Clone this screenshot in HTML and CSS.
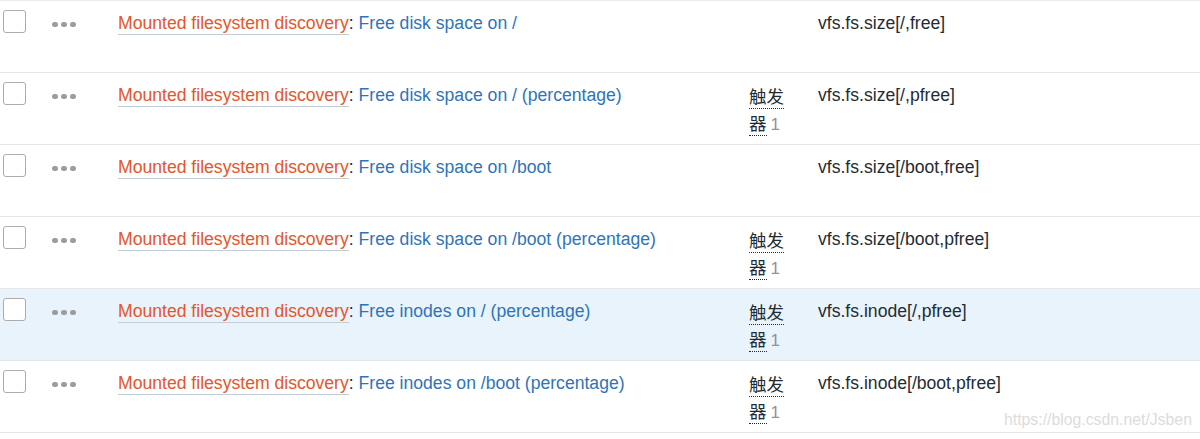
FILE: index.html
```html
<!DOCTYPE html>
<html>
<head>
<meta charset="utf-8">
<link rel="stylesheet" href="styles.css">
</head>
<body>
<div class="list">
  <div class="row">
    <div class="c-check"><span class="checkbox"></span></div>
    <div class="c-dots"><span class="dots"><i></i><i></i><i></i></span></div>
    <div class="c-name"><a class="rule">Mounted filesystem discovery</a>: <a class="item">Free disk space on /</a></div>
    <div class="c-trig"></div>
    <div class="c-key">vfs.fs.size[/,free]</div>
  </div>
  <div class="row">
    <div class="c-check"><span class="checkbox"></span></div>
    <div class="c-dots"><span class="dots"><i></i><i></i><i></i></span></div>
    <div class="c-name"><a class="rule">Mounted filesystem discovery</a>: <a class="item">Free disk space on / (percentage)</a></div>
    <div class="c-trig"><a class="trig">触发器</a> <span class="cnt">1</span></div>
    <div class="c-key">vfs.fs.size[/,pfree]</div>
  </div>
  <div class="row">
    <div class="c-check"><span class="checkbox"></span></div>
    <div class="c-dots"><span class="dots"><i></i><i></i><i></i></span></div>
    <div class="c-name"><a class="rule">Mounted filesystem discovery</a>: <a class="item">Free disk space on /boot</a></div>
    <div class="c-trig"></div>
    <div class="c-key">vfs.fs.size[/boot,free]</div>
  </div>
  <div class="row">
    <div class="c-check"><span class="checkbox"></span></div>
    <div class="c-dots"><span class="dots"><i></i><i></i><i></i></span></div>
    <div class="c-name"><a class="rule">Mounted filesystem discovery</a>: <a class="item">Free disk space on /boot (percentage)</a></div>
    <div class="c-trig"><a class="trig">触发器</a> <span class="cnt">1</span></div>
    <div class="c-key">vfs.fs.size[/boot,pfree]</div>
  </div>
  <div class="row hover">
    <div class="c-check"><span class="checkbox"></span></div>
    <div class="c-dots"><span class="dots"><i></i><i></i><i></i></span></div>
    <div class="c-name"><a class="rule">Mounted filesystem discovery</a>: <a class="item">Free inodes on / (percentage)</a></div>
    <div class="c-trig"><a class="trig">触发器</a> <span class="cnt">1</span></div>
    <div class="c-key">vfs.fs.inode[/,pfree]</div>
  </div>
  <div class="row">
    <div class="c-check"><span class="checkbox"></span></div>
    <div class="c-dots"><span class="dots"><i></i><i></i><i></i></span></div>
    <div class="c-name"><a class="rule">Mounted filesystem discovery</a>: <a class="item">Free inodes on /boot (percentage)</a></div>
    <div class="c-trig"><a class="trig">触发器</a> <span class="cnt">1</span></div>
    <div class="c-key">vfs.fs.inode[/boot,pfree]</div>
  </div>
</div>
<div class="watermark">https://blog.csdn.net/Jsben</div>
</body>
</html>
```
FILE: styles.css
```css
html, body {
  margin: 0;
  padding: 0;
  background: #ffffff;
}
body {
  font-family: "Liberation Sans", Arial, "Noto Sans CJK SC", sans-serif;
  font-size: 17.6px;
  line-height: 27px;
  color: #1f2c33;
  position: relative;
  width: 1200px;
  height: 439px;
  overflow: hidden;
}
.list {
  border-top: 1px solid #ebebeb;
}
.row {
  display: grid;
  grid-template-columns: 52px 66px 631px 69px 1fr;
  height: 71px;
  border-bottom: 1px solid #e6e6e6;
  box-sizing: content-box;
}
.row > div {
  padding-top: 9px;
}
.row.hover {
  background: #e8f3fc;
}
.c-check {
  padding-left: 3px;
}
.checkbox {
  display: block;
  width: 21px;
  height: 21px;
  border: 1px solid #acacac;
  border-radius: 3px;
  background: #ffffff;
}
.c-dots {
  display: flex;
  align-items: flex-start;
}
.dots {
  display: flex;
  gap: 3.5px;
  height: 27px;
  align-items: center;
  padding-top: 1px;
}
.dots i {
  display: block;
  width: 5.5px;
  height: 5.5px;
  border-radius: 50%;
  background: #9c9c9c;
}
.c-name {
  color: #1f2c33;
  white-space: nowrap;
}
.rule {
  color: #e4562b;
  border-bottom: 1px solid #c4ccd4;
  padding-bottom: 1px;
}
.item {
  color: #2f74b9;
}
.c-trig {
  padding-right: 18px;
  font-family: "Noto Sans CJK SC", sans-serif;
  font-size: 17.5px;
  line-height: 27px;
}
.trig {
  color: #1f2c33;
  border-bottom: 1px dotted #1f2c33;
}
.cnt {
  font-family: "Liberation Sans", Arial, sans-serif;
  font-size: 17px;
  color: #8a949b;
}
.c-key {
  color: #1f2c33;
  white-space: nowrap;
}
.watermark {
  position: absolute;
  left: 1004px;
  top: 406px;
  font-family: "Liberation Sans", Arial, sans-serif;
  font-size: 15.8px;
  line-height: 27px;
  color: #dcdcdc;
}
```
